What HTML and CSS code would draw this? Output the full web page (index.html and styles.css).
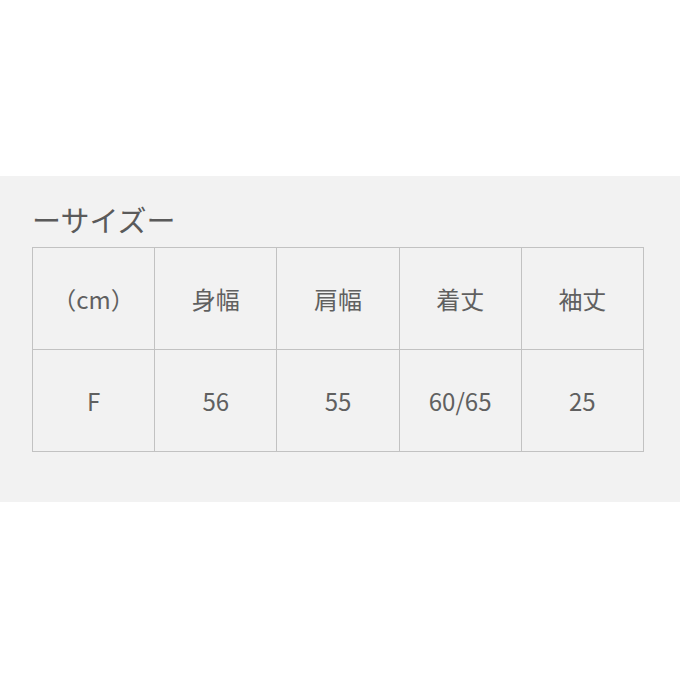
FILE: index.html
```html
<!DOCTYPE html>
<html lang="ja">
<head>
<meta charset="utf-8">
<link rel="stylesheet" href="styles.css">
</head>
<body>
<div class="top"></div>
<section class="band">
  <h2 class="title">ーサイズー</h2>
  <table class="size">
    <tr>
      <td>（cm）</td>
      <td>身幅</td>
      <td>肩幅</td>
      <td>着丈</td>
      <td>袖丈</td>
    </tr>
    <tr>
      <td>F</td>
      <td>56</td>
      <td>55</td>
      <td>60/65</td>
      <td>25</td>
    </tr>
  </table>
</section>
</body>
</html>
```

FILE: styles.css
```css
html, body {
  margin: 0;
  padding: 0;
  background: #ffffff;
}
body {
  width: 680px;
  height: 680px;
  font-family: "Noto Sans CJK JP", "Noto Sans", sans-serif;
  color: #5e5e5e;
}
.top {
  height: 176px;
}
.band {
  background: #f2f2f2;
  height: 326px;
  box-sizing: border-box;
  padding: 27px 36px 0 32px;
}
.title {
  margin: 0;
  font-size: 29px;
  font-weight: 400;
  line-height: 32px;
  color: #5a5a5a;
  height: 44px;
}
.size {
  width: 612px;
  border-collapse: collapse;
  table-layout: fixed;
}
.size td {
  border: 1.5px solid #c2c2c2;
  height: 101px;
  padding: 0;
  text-align: center;
  vertical-align: middle;
  font-size: 24px;
  color: #606060;
}
```
